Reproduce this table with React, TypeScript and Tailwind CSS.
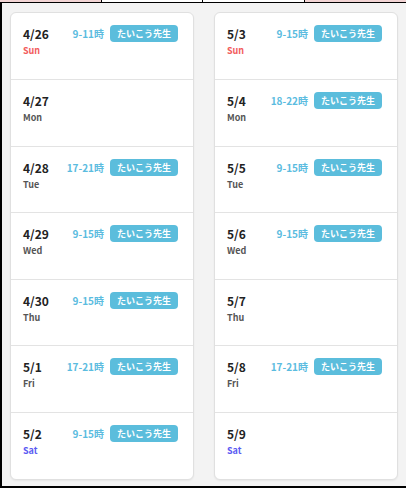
import React from 'react'

type Day = {
  date: string
  wd: string
  time?: string
}

const left: Day[] = [
  { date: '4/26', wd: 'Sun', time: '9-11時' },
  { date: '4/27', wd: 'Mon' },
  { date: '4/28', wd: 'Tue', time: '17-21時' },
  { date: '4/29', wd: 'Wed', time: '9-15時' },
  { date: '4/30', wd: 'Thu', time: '9-15時' },
  { date: '5/1', wd: 'Fri', time: '17-21時' },
  { date: '5/2', wd: 'Sat', time: '9-15時' },
]

const right: Day[] = [
  { date: '5/3', wd: 'Sun', time: '9-15時' },
  { date: '5/4', wd: 'Mon', time: '18-22時' },
  { date: '5/5', wd: 'Tue', time: '9-15時' },
  { date: '5/6', wd: 'Wed', time: '9-15時' },
  { date: '5/7', wd: 'Thu' },
  { date: '5/8', wd: 'Fri', time: '17-21時' },
  { date: '5/9', wd: 'Sat' },
]

const wdColor = (wd: string) => {
  if (wd === 'Sun') return 'text-[#f25c5c]'
  if (wd === 'Sat') return 'text-[#5b5bf2]'
  return 'text-[#555555]'
}

const Row = ({ d, last }: { d: Day; last: boolean }) => (
  <div className={`flex justify-between items-start h-[66.6px] pl-3 pr-[15px] pt-[12px] ${last ? '' : 'border-b border-[#e3e3e3]'}`}>
    <div className="flex flex-col pt-[1px]">
      <span className="text-[12px] leading-[15px] font-bold text-[#222]">{d.date}</span>
      <span className={`text-[9px] leading-[12px] mt-[4px] font-bold ${wdColor(d.wd)}`}>{d.wd}</span>
    </div>
    {d.time && (
      <div className="flex items-center gap-[6px] h-[17px]">
        <span className="text-[10px] leading-[17px] font-bold text-[#5bbcdf]">{d.time}</span>
        <span className="h-[17px] px-[7px] rounded-[4px] bg-[#5bbddc] text-white text-[9px] font-bold leading-[17px]">たいこう先生</span>
      </div>
    )}
  </div>
)

const Card = ({ days }: { days: Day[] }) => (
  <div className="flex-1 flex flex-col bg-white border border-[#e0e0e0] rounded-[6px] shadow-[0_1px_2px_rgba(0,0,0,0.06)] overflow-hidden">
    {days.map((d, i) => (
      <Row key={d.date} d={d} last={i === days.length - 1} />
    ))}
  </div>
)

export default function App() {
  return (
    <div className="w-[406px] h-[488px] flex flex-col bg-black" style={{ fontFamily: '"Noto Sans CJK JP", "Noto Sans", sans-serif' }}>
      {/* top strip */}
      <div className="h-[4px] grid grid-cols-4 border-b border-black">
        <div className="bg-[#f2d4d4] border-r border-black" />
        <div className="bg-white border-r border-black" />
        <div className="bg-white border-r border-black" />
        <div className="bg-[#f2d4d4]" />
      </div>
      <div className="flex-1 flex">
        <div className="w-[2px] bg-black" />
        {/* Panel */}
        <div className="flex-1 flex gap-5 bg-[#f3f3f3] pl-2 pr-[8px] pt-[9px] pb-[6px]">
          <Card days={left} />
          <Card days={right} />
        </div>
      </div>
      <div className="h-[2px] bg-black" />
    </div>
  )
}
